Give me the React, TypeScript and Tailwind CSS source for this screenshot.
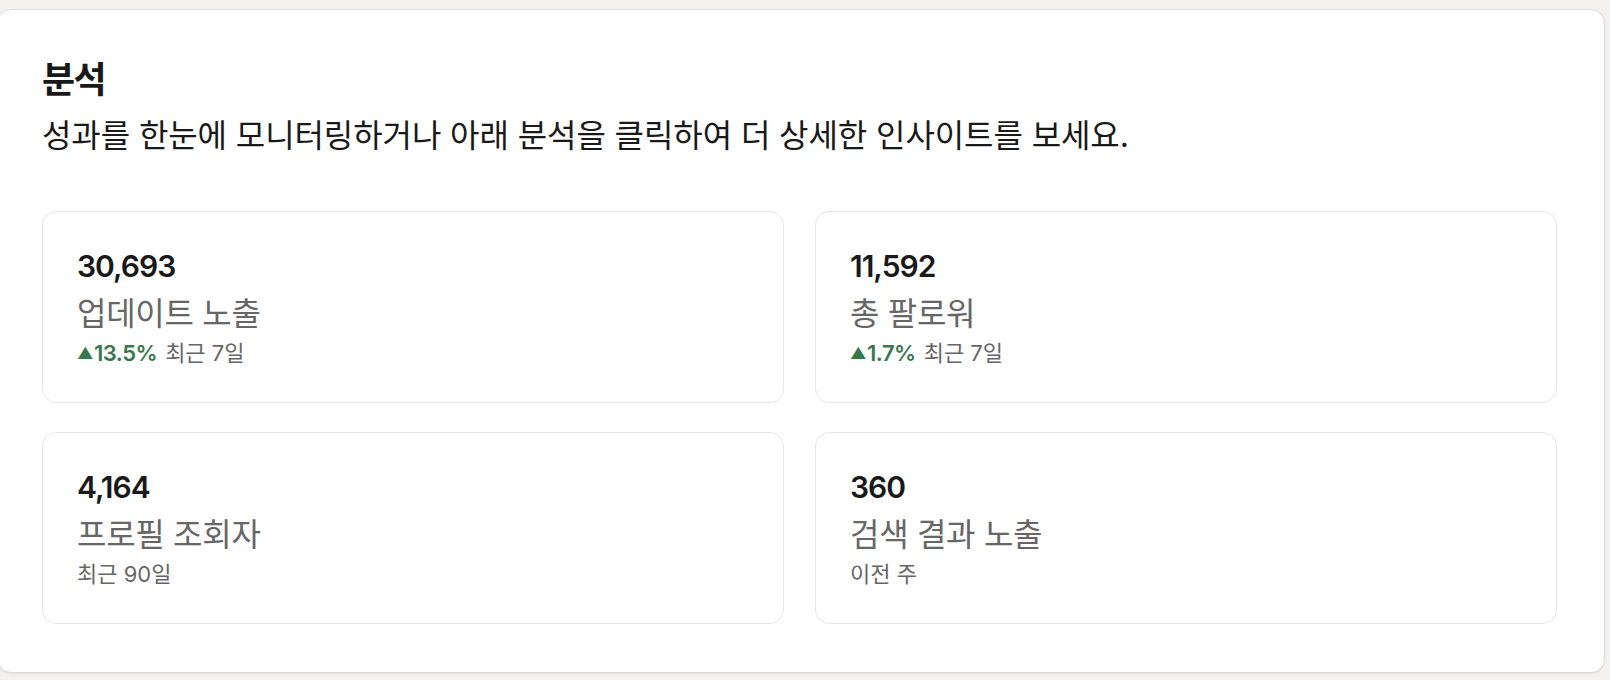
const stats = [
  { value: '30,693', label: '업데이트 노출', change: '13.5%', period: '최근 7일' },
  { value: '11,592', label: '총 팔로워', change: '1.7%', period: '최근 7일' },
  { value: '4,164', label: '프로필 조회자', period: '최근 90일' },
  { value: '360', label: '검색 결과 노출', period: '이전 주' },
]

function StatCard({ value, label, change, period }: { value: string; label: string; change?: string; period: string }) {
  return (
    <div className="rounded-[14px] border border-[#e6e6e6] bg-white px-[34px] pt-[34px] pb-[34px]">
      <div className="text-[30px] leading-[40px] font-semibold text-[#191919] tracking-[-1px]">{value}</div>
      <div className="mt-[8px] text-[32px] leading-[40px] text-[#666666] tracking-[-0.3px]">{label}</div>
      <div className="mt-[4px] flex items-center text-[22px] leading-[30px] text-[#666666]">
        {change && (
          <span className="mr-[8px] flex items-center font-semibold text-[#37784a] tracking-[-0.5px]">
            <span className="mr-[1px] text-[16px]">▲</span>
            {change}
          </span>
        )}
        <span>{period}</span>
      </div>
    </div>
  )
}

export default function App() {
  return (
    <div
      className="h-[680px] overflow-hidden bg-[#f3f2ee] pt-[9px]"
      style={{ fontFamily: 'Inter, "Noto Sans CJK KR", sans-serif' }}
    >
      <div className="-ml-[3px] h-[664px] w-[1608px] rounded-[14px] border border-[#dcdbd8] bg-white pl-[44px] pt-[48px] shadow-[0_1px_2px_rgba(0,0,0,0.08)]">
        <h2 className="text-[36px] leading-[44px] font-bold text-[#191919] tracking-[-1.5px]">분석</h2>
        <p className="mt-[13px] text-[32px] leading-[42px] text-[#191919] tracking-[-0.1px]">
          성과를 한눈에 모니터링하거나 아래 분석을 클릭하여 더 상세한 인사이트를 보세요.
        </p>
        <div className="mt-[54px] grid w-[1515px] grid-cols-2 gap-x-[31px] gap-y-[29px]">
          {stats.map((s) => (
            <StatCard key={s.value} {...s} />
          ))}
        </div>
      </div>
    </div>
  )
}
